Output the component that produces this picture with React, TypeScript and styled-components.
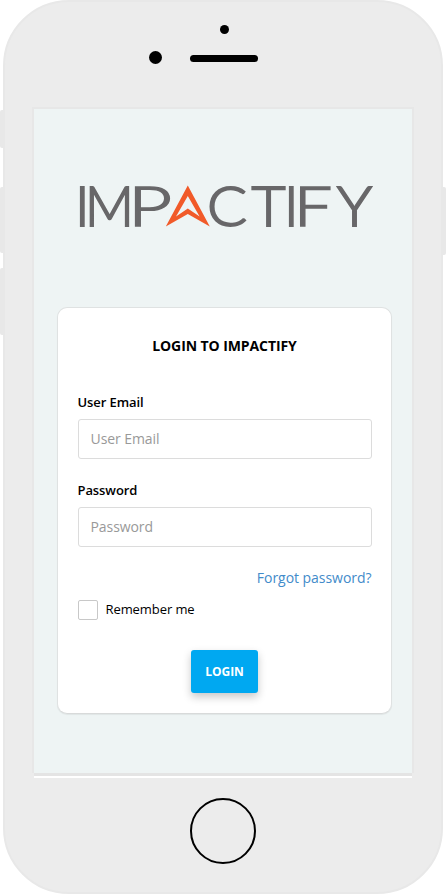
import React from "react";
import styled, { createGlobalStyle } from "styled-components";

const GlobalStyle = createGlobalStyle`
  *, *::before, *::after { box-sizing: border-box; }
  html, body { margin: 0; background: #fff; overflow: hidden; }
  body { font-family: "Open Sans", "Noto Sans", sans-serif; color: #000; }
`;

const Stage = styled.main`
  position: relative;
  width: 446px;
  height: 894px;
  padding: 0 3px;
  overflow: hidden;
`;

const SideKey = styled.span<{ $side: "left" | "right"; $top: number; $height: number }>`
  position: absolute;
  ${(p) => p.$side}: 0;
  top: ${(p) => p.$top}px;
  width: 5px;
  height: ${(p) => p.$height}px;
  border-radius: 2px;
  background: #e8e8e8;
`;

const Phone = styled.div`
  position: relative;
  display: flex;
  flex-direction: column;
  align-items: center;
  width: 440px;
  height: 894px;
  border: 2px solid #e8e8e8;
  border-radius: 66px;
  background: #ececec;
`;

const Bezel = styled.div`
  display: flex;
  flex-direction: column;
  align-items: center;
  height: 105px;
  width: 100%;
  padding-top: 22px;
`;

const Camera = styled.span`
  width: 9px;
  height: 9px;
  margin: 0.5px 0 -0.5px 3px;
  border-radius: 50%;
  background: #000;
`;

const SensorRow = styled.div`
  display: flex;
  align-items: center;
  gap: 28px;
  margin: 18px 39px 0 0;
`;

const Sensor = styled.span`
  width: 13px;
  height: 13px;
  border-radius: 50%;
  background: #000;
`;

const Speaker = styled.span`
  width: 68px;
  height: 7px;
  margin-top: 2px;
  border-radius: 4px;
  background: #000;
`;

const Screen = styled.section`
  display: flex;
  flex-direction: column;
  align-items: center;
  width: 382px;
  height: 666px;
  border: 2px solid #e7e7e7;
  border-bottom: 0;
  padding-top: 61px;
  background: #eef4f4;
`;

const Ledge = styled.div`
  width: 378px;
  height: 5px;
  border-top: 3px solid #e4e4e4;
  background: #fff;
`;

const LogoArt = styled.svg`
  display: block;
  flex: none;
  width: 308px;
  height: 74px;
  margin-left: 4px;
  overflow: visible;
  font: 300 56px Lato, sans-serif;
  fill: #686769;
`;

const Letter = styled.text`
  stroke: #686769;
  stroke-width: 1.9px;
  vector-effect: non-scaling-stroke;
`;

const Card = styled.form`
  display: flex;
  flex-direction: column;
  width: 335px;
  height: 407px;
  margin: 63px 0 0 3px;
  padding: 28px 19.5px 0;
  border: 1px solid #dfe2e2;
  border-bottom-color: #d8dada;
  border-radius: 10px;
  background: #fff;
  box-shadow: 0 1px 1px rgba(0, 0, 0, 0.06);
`;

const Title = styled.h1`
  margin: 0 0 36px;
  font-size: 14px;
  line-height: 20px;
  font-weight: 700;
  letter-spacing: -0.09px;
  text-align: center;
`;

const Field = styled.label`
  display: flex;
  flex-direction: column;
  gap: 7px;
  margin-bottom: 21px;
  font-size: 13px;
  line-height: 20px;
  font-weight: 600;
  letter-spacing: -0.08px;
`;

const Input = styled.input`
  width: 100%;
  height: 40px;
  padding: 0 12px 1px;
  border: 1px solid #dcdcdc;
  border-radius: 3px;
  outline: none;
  background: #fff;
  font: 400 14px "Open Sans", sans-serif;
  letter-spacing: -0.08px;
  &::placeholder { color: #999; opacity: 1; }
`;

const Forgot = styled.a`
  align-self: flex-end;
  font-size: 14px;
  line-height: 20px;
  letter-spacing: -0.04px;
  color: #428bca;
  text-decoration: none;
`;

const Remember = styled.label`
  display: flex;
  align-items: center;
  gap: 8px;
  margin-top: 12px;
  font-size: 13px;
  line-height: 18px;
  letter-spacing: -0.08px;
`;

const RememberText = styled.span`
  padding-bottom: 2px;
`;

const Checkbox = styled.input`
  appearance: none;
  width: 20px;
  height: 20px;
  margin: 0;
  border: 1px solid #c8c8c8;
  border-radius: 2px;
  background: #fff;
`;

const LoginButton = styled.button`
  align-self: center;
  width: 67px;
  height: 43px;
  margin: 30px 0 0 0;
  padding: 0;
  border: 0;
  border-radius: 3px;
  background: #00a8f1;
  color: #fff;
  font: 700 12px "Open Sans", sans-serif;
  box-shadow: 0 4px 8px rgba(0, 0, 0, 0.22);
`;

const HomeButton = styled.span`
  width: 66px;
  height: 66px;
  margin: 20px 0 0 0;
  border: 2px solid #000;
  border-radius: 50%;
`;

type Glyph = { char: string; x: number; scale: number };

const glyphs: Glyph[] = [
  { char: "I", x: 4, scale: 1 },
  { char: "M", x: 14, scale: 0.96 },
  { char: "P", x: 57, scale: 1.36 },
  { char: "C", x: 136, scale: 1.06 },
  { char: "T", x: 180.5, scale: 1.05 },
  { char: "I", x: 213, scale: 1 },
  { char: "F", x: 223, scale: 1.2 },
  { char: "Y", x: 266, scale: 1.05 },
];

function Logo() {
  return (
    <LogoArt viewBox="0 0 308 74" role="img" aria-label="Impactify">
      {glyphs.map(({ char, x, scale }, i) => (
        <Letter key={i} transform={`translate(${x} 56) scale(${scale} 1)`}>
          {char}
        </Letter>
      ))}
      <path
        d="M116.8 15.5 138.8 56.5 116.8 44 94.8 56.5ZM116.8 26 105 46.5 116.8 38.5 128.6 46.5Z"
        fill="#f15a29"
        fillRule="evenodd"
      />
    </LogoArt>
  );
}

export default function App() {
  return (
    <Stage>
      <GlobalStyle />
      <SideKey $side="left" $top={110} $height={38} />
      <SideKey $side="left" $top={187} $height={66} />
      <SideKey $side="left" $top={268} $height={67} />
      <SideKey $side="right" $top={187} $height={68} />
      <Phone>
        <Bezel>
          <Camera />
          <SensorRow>
            <Sensor />
            <Speaker />
          </SensorRow>
        </Bezel>
        <Screen>
          <Logo />
          <Card onSubmit={(e) => e.preventDefault()}>
            <Title>LOGIN TO IMPACTIFY</Title>
            <Field>
              User Email
              <Input type="email" placeholder="User Email" />
            </Field>
            <Field>
              Password
              <Input type="password" placeholder="Password" />
            </Field>
            <Forgot href="#">Forgot password?</Forgot>
            <Remember>
              <Checkbox type="checkbox" />
              <RememberText>Remember me</RememberText>
            </Remember>
            <LoginButton type="submit">LOGIN</LoginButton>
          </Card>
        </Screen>
        <Ledge />
        <HomeButton />
      </Phone>
    </Stage>
  );
}
